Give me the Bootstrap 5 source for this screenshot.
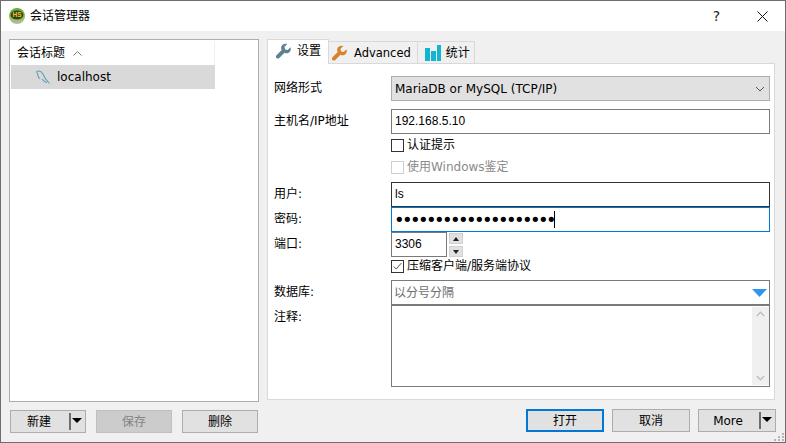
<!DOCTYPE html>
<html lang="zh-CN">
<head>
    <meta charset="UTF-8">
    <title>会话管理器</title>
    <link href="https://cdn.jsdelivr.net/npm/bootstrap@5.3.3/dist/css/bootstrap.min.css" rel="stylesheet">
    <style>
        html, body { margin: 0; width: 786px; height: 443px; overflow: hidden; }
        body, .form-control, .form-select, .btn, .nav-link, .list-group-item {
          font-family: "DejaVu Sans", "Noto Sans CJK SC", sans-serif;
          font-size: 12px;
          line-height: 16px;
          color: #000;
        }
        .dlg-window {
          position: relative;
          width: 786px;
          height: 443px;
          background: #f0f0f0;
          border: 1px solid #6e6e6e;
        }
        .dlg-title { height: 30px; background: #fff; padding-left: 8px; }
        .dlg-title-text { margin-left: 5px; }
        .dlg-help { width: 45px; text-align: center; font-size: 14px; margin-left: auto; color: #222; }
        .dlg-close { width: 46px; text-align: center; }
        .dlg-main { padding: 8px 9px 0 8px; gap: 8px; }

        /* left session list */
        .dlg-left { width: 250px; }
        .dlg-sessions {
          height: 363px;
          background: #fff;
          border: 1px solid #adadad;
          border-radius: 0;
          padding: 1px;
        }
        .dlg-sessions .list-group-item {
          width: 204px;
          padding: 0;
          border: 0;
          border-radius: 0;
          background: #fff;
        }
        .dlg-sessions .dlg-head { height: 24px; padding-left: 6px; gap: 8px; border-right: 1px solid #f0f0f0; }
        .dlg-sessions .dlg-row { height: 24px; padding-left: 25px; gap: 6px; background: #d9d9d9; }
        .dlg-btns { margin-top: 8px; gap: 10px; }
        .dlg-left .dlg-btns { padding: 0 1px; }
        .dlg-btn {
          width: 76px;
          height: 23px;
          padding: 0;
          background: #e1e1e1;
          border: 1px solid #adadad;
          border-radius: 0;
        }
        .dlg-btn.disabled, .dlg-btn:disabled { background: #cccccc; border-color: #bfbfbf; color: #838383; opacity: 1; }
        .dlg-btn-main { border: 2px solid #0078d7; }
        .dlg-btn-wide { width: 78px; }
        .dlg-split { position: relative; }
        .dlg-split-arrow {
          position: absolute;
          right: 2px;
          top: 2px;
          width: 14px;
          height: 17px;
          border-left: 2px solid #6e6e6e;
        }
        .dlg-split-arrow::after {
          content: "";
          position: absolute;
          left: 1px;
          top: 5px;
          border: 5px solid transparent;
          border-top: 5px solid #000;
          border-bottom: 0;
        }
        .dlg-split-label { padding-right: 18px; }

        /* right tabs */
        .dlg-right { width: 509px; }
        .dlg-tabs { border-bottom: 0; height: 24px; align-items: flex-end; position: relative; z-index: 1; }
        .dlg-tabs .nav-link {
          display: flex;
          align-items: center;
          height: 22px;
          margin: 0 0 1px -1px;
          padding: 0 4px 0 6px;
          gap: 5px;
          color: #000;
          background: #f0f0f0;
          border: 1px solid #d9d9d9;
          border-bottom: 0;
          border-radius: 0;
        }
        .dlg-tabs .nav-link.active {
          height: 25px;
          margin: 0;
          padding: 0 7px 2px 7px;
          background: #fff;
          border-color: #d9d9d9;
        }
        .dlg-tabs .dlg-tab-adv { padding: 0 6px 0 2px; gap: 6px; font-size: 11.5px; }
        .dlg-panel {
          width: 508px;
          height: 337px;
          background: #fff;
          border: 1px solid #d9d9d9;
          padding: 12px 3px 0 6px;
        }
        .dlg-label { width: 117px; flex: none; padding-bottom: 2px; }
        .dlg-label-top { padding: 4px 0 0; }
        .dlg-field-row { height: 25px; }
        .dlg-panel .form-control, .dlg-panel .form-select {
          height: 25px;
          min-height: 0;
          padding: 0 3px;
          border: 1px solid #7a7a7a;
          border-radius: 0;
          box-shadow: none;
        }
        .dlg-panel .form-control { font-family: "Liberation Sans", "Noto Sans CJK SC", sans-serif; padding-bottom: 2px; }
        .dlg-panel .dlg-dark { border-color: #333; }
        .dlg-panel .form-select {
          width: 379px;
          background-color: #e1e1e1;
          border-color: #adadad;
          --bs-form-select-bg-img: url("data:image/svg+xml,%3csvg xmlns='http://www.w3.org/2000/svg' viewBox='0 0 10 6'%3e%3cpath fill='none' stroke='%23555' d='M1 1l4 4 4-4'/%3e%3c/svg%3e");
          background-position: right 4px center;
          background-size: 10px 6px;
        }
        .dlg-panel .dlg-wide { width: 379px; }
        .dlg-check-row { height: 14px; margin-left: 117px; gap: 3px; }
        .dlg-check-row .form-check-input {
          width: 13px;
          height: 13px;
          margin: 0;
          flex: none;
          border: 1px solid #333;
          border-radius: 0;
          background-color: #fff;
        }
        .dlg-check-row .form-check-input:checked {
          background-color: #fff;
          border-color: #333;
          --bs-form-check-bg-image: url("data:image/svg+xml,%3csvg xmlns='http://www.w3.org/2000/svg' viewBox='0 0 13 13'%3e%3cpath fill='none' stroke='%23333' d='M2 6.500l3 3 6-7'/%3e%3c/svg%3e");
        }
        .dlg-check-row .form-check-input:disabled { opacity: 1; border-color: #cfcfcf; }
        .dlg-muted { color: #8a8a8a; }
        .dlg-mt2 { margin-top: 2px; }
        .dlg-mt7 { margin-top: 7px; }
        .dlg-pass {
          height: 25px;
          width: 379px;
          border: 1px solid #0078d7;
          background: #fff;
          padding-left: 2px;
        }
        .dlg-pass input {
          width: 160px;
          height: 23px;
          padding: 0;
          border: 0;
          outline: 0;
          font-family: "DejaVu Sans", sans-serif;
          font-size: 18px;
          letter-spacing: -2.62px;
        }
        .dlg-caret { width: 1px; height: 17px; background: #000; }
        .dlg-panel .dlg-port { width: 56px; }
        .dlg-spin { margin-left: 2px; width: 14px; height: 25px; padding-top: 1px; gap: 2px; }
        .dlg-spin-btn {
          height: 11px;
          background: #e1e1e1;
          border: 1px solid #d0d0d0;
        }
        .dlg-combo {
          width: 379px;
          height: 25px;
          background: #fff;
          border: 1px solid #7a7a7a;
          padding: 0 2px;
          color: #6d6d6d;
        }
        .dlg-memo {
          width: 379px;
          height: 82px;
          background: #fff;
          border: 1px solid #7a7a7a;
          padding: 1px 0;
        }
        .dlg-memo-bar { width: 17px; background: #f0f0f0; }
        .dlg-foot { margin-top: 9px; gap: 8px; }
        .dlg-grip { position: absolute; right: 0; bottom: 0; }
    </style>
</head>
<body>

<div class="dlg-window d-flex flex-column">

    <div class="dlg-title d-flex align-items-center">
        <svg width="16" height="16" viewBox="0 0 16 16">
            <defs>
                <linearGradient id="rim" x1="0" y1="0" x2="0" y2="1">
                    <stop offset="0" stop-color="#5cae2e"/>
                    <stop offset=".6" stop-color="#8cc24a"/>
                    <stop offset="1" stop-color="#b9b9b9"/>
                </linearGradient>
            </defs>
            <circle cx="8" cy="8" r="8" fill="url(#rim)"/>
            <ellipse cx="8" cy="7" rx="6.400" ry="4.600" fill="#34401f"/>
            <text x="8" y="9.300" text-anchor="middle" font-family="Liberation Sans, sans-serif" font-size="6.500" font-weight="700" fill="#f2c230">HS</text>
        </svg>
        <span class="dlg-title-text">会话管理器</span>
        <span class="dlg-help">?</span>
        <span class="dlg-close">
            <svg width="11" height="11" viewBox="0 0 11 11"><path d="M.5.5l10 10M10.500.5l-10 10" stroke="#111" fill="none"/></svg>
        </span>
    </div>

    <div class="dlg-main d-flex">
        <div class="dlg-left">
            <div class="list-group dlg-sessions">
                <div class="list-group-item dlg-head d-flex align-items-center">
                    <span>会话标题</span>
                    <svg width="9" height="5" viewBox="0 0 9 5"><path d="M.5 4.500l4-4 4 4" stroke="#777" fill="none"/></svg>
                </div>
                <div class="list-group-item dlg-row d-flex align-items-center">
                    <svg width="15" height="15" viewBox="0 0 15 15">
                        <path d="M.5 1.500C3 .5 5.500 1.500 7 4c1 2 1.500 4 3.500 6l3 3.500M.5 1.500C1.500 3 1.800 5 2.500 7c.4 1 1 1.500 1.500 1M6 9c1 1.500 3 3 5 3.500" fill="none" stroke="#5f9db3" stroke-width="1.100"/>
                    </svg>
                    <span>localhost</span>
                </div>
            </div>
            <div class="dlg-btns d-flex">
                <button type="button" class="btn dlg-btn dlg-split"><span class="dlg-split-label">新建</span><span class="dlg-split-arrow"></span></button>
                <button type="button" class="btn dlg-btn" disabled>保存</button>
                <button type="button" class="btn dlg-btn">删除</button>
            </div>
        </div>

        <div class="dlg-right">
            <ul class="nav nav-tabs dlg-tabs">
                <li class="nav-item">
                    <a class="nav-link active" href="#">
                        <svg width="17" height="16" viewBox="0 0 16 16"><path fill="#5f7f92" d="M15 4.200L12.200 7 9.600 6.400 9 3.800 11.800 1C9.600.3 7.300 1 6.200 2.800 5.400 4.200 5.500 5.800 6.200 7L1 12.200C.2 13 .2 14.200 1 15s2 .8 2.800 0L9 9.800c1.200.7 2.800.8 4.200 0C15 8.700 15.700 6.400 15 4.200z"/></svg>
                        设置
                    </a>
                </li>
                <li class="nav-item">
                    <a class="nav-link dlg-tab-adv" href="#">
                        <svg width="17" height="16" viewBox="0 0 16 16"><path fill="#d9822b" d="M15 4.200L12.200 7 9.600 6.400 9 3.800 11.800 1C9.600.3 7.300 1 6.200 2.800 5.400 4.200 5.500 5.800 6.200 7L1 12.200C.2 13 .2 14.200 1 15s2 .8 2.800 0L9 9.800c1.200.7 2.800.8 4.200 0C15 8.700 15.700 6.400 15 4.200z"/></svg>
                        Advanced
                    </a>
                </li>
                <li class="nav-item">
                    <a class="nav-link" href="#">
                        <svg width="17" height="16" viewBox="0 0 17 16"><path fill="#10b6cf" d="M1 3h5v13H1zM7 6h5v10H7zM13 0h4v16h-4z"/></svg>
                        统计
                    </a>
                </li>
            </ul>

            <div class="dlg-panel">
                <div class="d-flex align-items-center dlg-field-row">
                    <label class="dlg-label" for="netType">网络形式</label>
                    <select class="form-select" id="netType"><option>MariaDB or MySQL (TCP/IP)</option></select>
                </div>
                <div class="d-flex align-items-center dlg-field-row mt-2">
                    <label class="dlg-label" for="hostName">主机名/IP地址</label>
                    <input class="form-control dlg-wide" id="hostName" value="192.168.5.10">
                </div>
                <div class="d-flex align-items-center dlg-check-row mt-1">
                    <input class="form-check-input" type="checkbox" id="authPrompt">
                    <label for="authPrompt">认证提示</label>
                </div>
                <div class="d-flex align-items-center dlg-check-row mt-2">
                    <input class="form-check-input" type="checkbox" id="winAuth" disabled>
                    <label class="dlg-muted" for="winAuth">使用Windows鉴定</label>
                </div>
                <div class="d-flex align-items-center dlg-field-row mt-2">
                    <label class="dlg-label" for="userName">用户:</label>
                    <input class="form-control dlg-wide dlg-dark" id="userName" value="ls">
                </div>
                <div class="d-flex align-items-center dlg-field-row">
                    <label class="dlg-label" for="passWord">密码:</label>
                    <div class="dlg-pass d-flex align-items-center">
                        <input type="password" id="passWord" value="12345678901234567890">
                        <span class="dlg-caret"></span>
                    </div>
                </div>
                <div class="d-flex align-items-center dlg-field-row">
                    <label class="dlg-label" for="portNum">端口:</label>
                    <input class="form-control dlg-port" id="portNum" value="3306">
                    <div class="dlg-spin d-flex flex-column">
                        <div class="dlg-spin-btn d-flex align-items-center justify-content-center">
                            <svg width="6" height="4" viewBox="0 0 6 4"><path d="M3 0l3 4H0z" fill="#222"/></svg>
                        </div>
                        <div class="dlg-spin-btn d-flex align-items-center justify-content-center">
                            <svg width="6" height="4" viewBox="0 0 6 4"><path d="M3 4L0 0h6z" fill="#222"/></svg>
                        </div>
                    </div>
                </div>
                <div class="d-flex align-items-center dlg-check-row dlg-mt2">
                    <input class="form-check-input" type="checkbox" id="compress" checked>
                    <label for="compress">压缩客户端/服务端协议</label>
                </div>
                <div class="d-flex align-items-center dlg-field-row dlg-mt7">
                    <span class="dlg-label">数据库:</span>
                    <div class="dlg-combo d-flex align-items-center justify-content-between">
                        <span>以分号分隔</span>
                        <svg width="15" height="8" viewBox="0 0 15 8"><path d="M0 0h15L7.500 8z" fill="#2e96f0"/></svg>
                    </div>
                </div>
                <div class="d-flex">
                    <span class="dlg-label dlg-label-top">注释:</span>
                    <div class="dlg-memo d-flex justify-content-end">
                        <div class="dlg-memo-bar d-flex flex-column justify-content-between align-items-center py-1">
                            <svg width="9" height="6" viewBox="0 0 9 6"><path d="M.8 5l3.700-3.700L8.200 5" fill="none" stroke="#c0c0c0" stroke-width="1.600"/></svg>
                            <svg width="9" height="6" viewBox="0 0 9 6"><path d="M.8 1l3.700 3.700L8.200 1" fill="none" stroke="#c0c0c0" stroke-width="1.600"/></svg>
                        </div>
                    </div>
                </div>
            </div>

            <div class="dlg-foot d-flex justify-content-end">
                <button type="button" class="btn dlg-btn dlg-btn-wide dlg-btn-main">打开</button>
                <button type="button" class="btn dlg-btn dlg-btn-wide">取消</button>
                <button type="button" class="btn dlg-btn dlg-btn-wide dlg-split"><span class="dlg-split-label">More</span><span class="dlg-split-arrow"></span></button>
            </div>
        </div>
    </div>

    <svg class="dlg-grip" width="11" height="9" viewBox="0 0 11 9">
        <path fill="#b5b5b5" d="M8 0h2v2H8zM4 3h2v2H4zM8 3h2v2H8zM0 6h2v2H0zM4 6h2v2H4zM8 6h2v2H8z"/>
    </svg>
</div>

<script src="https://cdn.jsdelivr.net/npm/bootstrap@5.3.3/dist/js/bootstrap.bundle.min.js"></script>
</body>
</html>
